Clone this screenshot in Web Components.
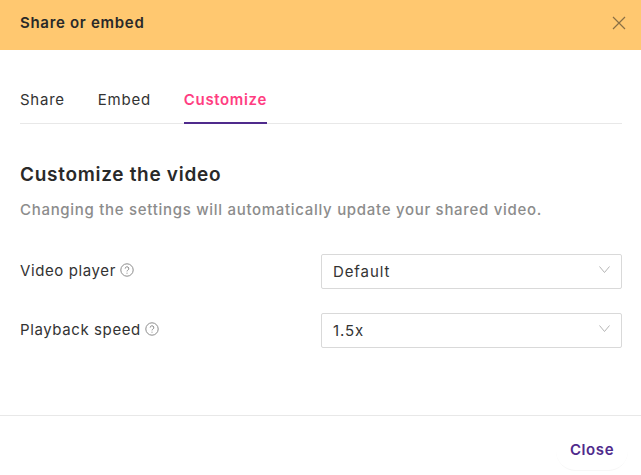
<!DOCTYPE html>
<html>
<head>
<meta charset="utf-8">
<style>
  html, body { margin: 0; padding: 0; background: #fff; }
  body { font-family: Inter, "Liberation Sans", sans-serif; color: #292929; }
</style>
</head>
<body>
<share-dialog>
  <span slot="title">Share or embed</span>
  <dialog-tab>Share</dialog-tab>
  <dialog-tab>Embed</dialog-tab>
  <dialog-tab active>Customize</dialog-tab>
  <setting-row label="Video player" value="Default"></setting-row>
  <setting-row label="Playback speed" value="1.5x"></setting-row>
</share-dialog>
<script>
const dialogTemplate = document.createElement('template');
dialogTemplate.innerHTML = `
<style>
  :host { display: flex; flex-direction: column; width: 641px; height: 475px; overflow: hidden; background: #fff; }
  .head { flex: none; box-sizing: border-box; height: 50px; background: #ffc870; display: flex; align-items: center; justify-content: space-between; padding: 0 15px 5px 20px; font-size: 15px; font-weight: 600; letter-spacing: .7px; color: #292929; }
  .x { display: block; width: 14px; height: 14px; }
  .body { flex: 1 1 auto; padding: 40px 19px 0 20px; }
  .tabs { display: flex; gap: 33px; height: 33px; border-bottom: 1px solid #e8e8e8; }
  h2 { margin: 38px 0 0; font-size: 19px; line-height: 26px; font-weight: 600; letter-spacing: .7px; color: #292929; }
  p { margin: 12px 0 34px; font-size: 15px; line-height: 20px; font-weight: 500; letter-spacing: .7px; color: #8c8c8c; }
  .rows { display: flex; flex-direction: column; gap: 24px; }
  .foot { flex: none; box-sizing: border-box; height: 60px; border-top: 1px solid #e8e8e8; display: flex; justify-content: flex-end; padding: 16px 13px 4px 0; }
  .close { box-sizing: border-box; width: 72px; border-radius: 0 0 20px 20px; border-bottom: 1px solid #f7f7f7; text-align: center; font-size: 15px; line-height: 36px; font-weight: 600; letter-spacing: .6px; color: #4f2a8c; }
</style>
<div class="head">
  <slot name="title"></slot>
  <svg class="x" viewBox="0 0 14 14" fill="none" stroke="#8a6f45" stroke-width="1.2"><path d="M1 1l12 12M13 1L1 13"/></svg>
</div>
<div class="body">
  <div class="tabs"><slot></slot></div>
  <h2>Customize the video</h2>
  <p>Changing the settings will automatically update your shared video.</p>
  <div class="rows"><slot name="rows"></slot></div>
</div>
<div class="foot"><div class="close">Close</div></div>
`;

class ShareDialog extends HTMLElement {
  connectedCallback() {
    if (!this.shadowRoot) {
      const root = this.attachShadow({ mode: 'open' });
      root.appendChild(dialogTemplate.content.cloneNode(true));
      this.querySelectorAll('setting-row').forEach(r => r.slot = 'rows');
    }
  }
}

const tabTemplate = document.createElement('template');
tabTemplate.innerHTML = `
<style>
  :host { display: block; box-sizing: border-box; height: 34px; font-size: 15px; line-height: 20px; font-weight: 400; letter-spacing: .75px; color: #333; }
  :host([active]) { color: #ff3d81; font-weight: 600; letter-spacing: .65px; border-bottom: 2px solid #4f2a8c; }
</style>
<slot></slot>
`;

class DialogTab extends HTMLElement {
  connectedCallback() {
    if (!this.shadowRoot) {
      this.attachShadow({ mode: 'open' }).appendChild(tabTemplate.content.cloneNode(true));
    }
  }
}

const rowTemplate = document.createElement('template');
rowTemplate.innerHTML = `
<style>
  :host { display: flex; align-items: center; justify-content: space-between; height: 35px; }
  .label { display: flex; align-items: center; gap: 4px; font-size: 15px; font-weight: 400; letter-spacing: .6px; color: #333; margin-top: -3px; }
  .help { display: block; width: 14px; height: 14px; }
  .select { box-sizing: border-box; width: 301px; height: 35px; border: 1px solid #d9d9d9; border-radius: 2px; display: flex; align-items: center; justify-content: space-between; padding: 0 11px 0 11px; font-size: 15px; letter-spacing: .9px; color: #333; }
  .chev { display: block; width: 11px; height: 7px; margin-top: -4px; }
</style>
<div class="label">
  <span class="text"></span>
  <svg class="help" viewBox="0 0 14 14" fill="none" stroke="#8c8c8c"><circle cx="7" cy="7" r="6.2"/><path d="M5.2 5.6a1.8 1.8 0 1 1 2.6 1.6c-.5.3-.8.6-.8 1.2"/><path d="M7 9.7v1"/></svg>
</div>
<div class="select">
  <span class="value"></span>
  <svg class="chev" viewBox="0 0 11 7" fill="none" stroke="#b5b5b5"><path d="M.5.5l5 6 5-6"/></svg>
</div>
`;

class SettingRow extends HTMLElement {
  connectedCallback() {
    if (!this.shadowRoot) {
      const root = this.attachShadow({ mode: 'open' });
      root.appendChild(rowTemplate.content.cloneNode(true));
      root.querySelector('.text').textContent = this.getAttribute('label') || '';
      root.querySelector('.value').textContent = this.getAttribute('value') || '';
    }
  }
}

customElements.define('dialog-tab', DialogTab);
customElements.define('setting-row', SettingRow);
customElements.define('share-dialog', ShareDialog);
</script>
</body>
</html>
